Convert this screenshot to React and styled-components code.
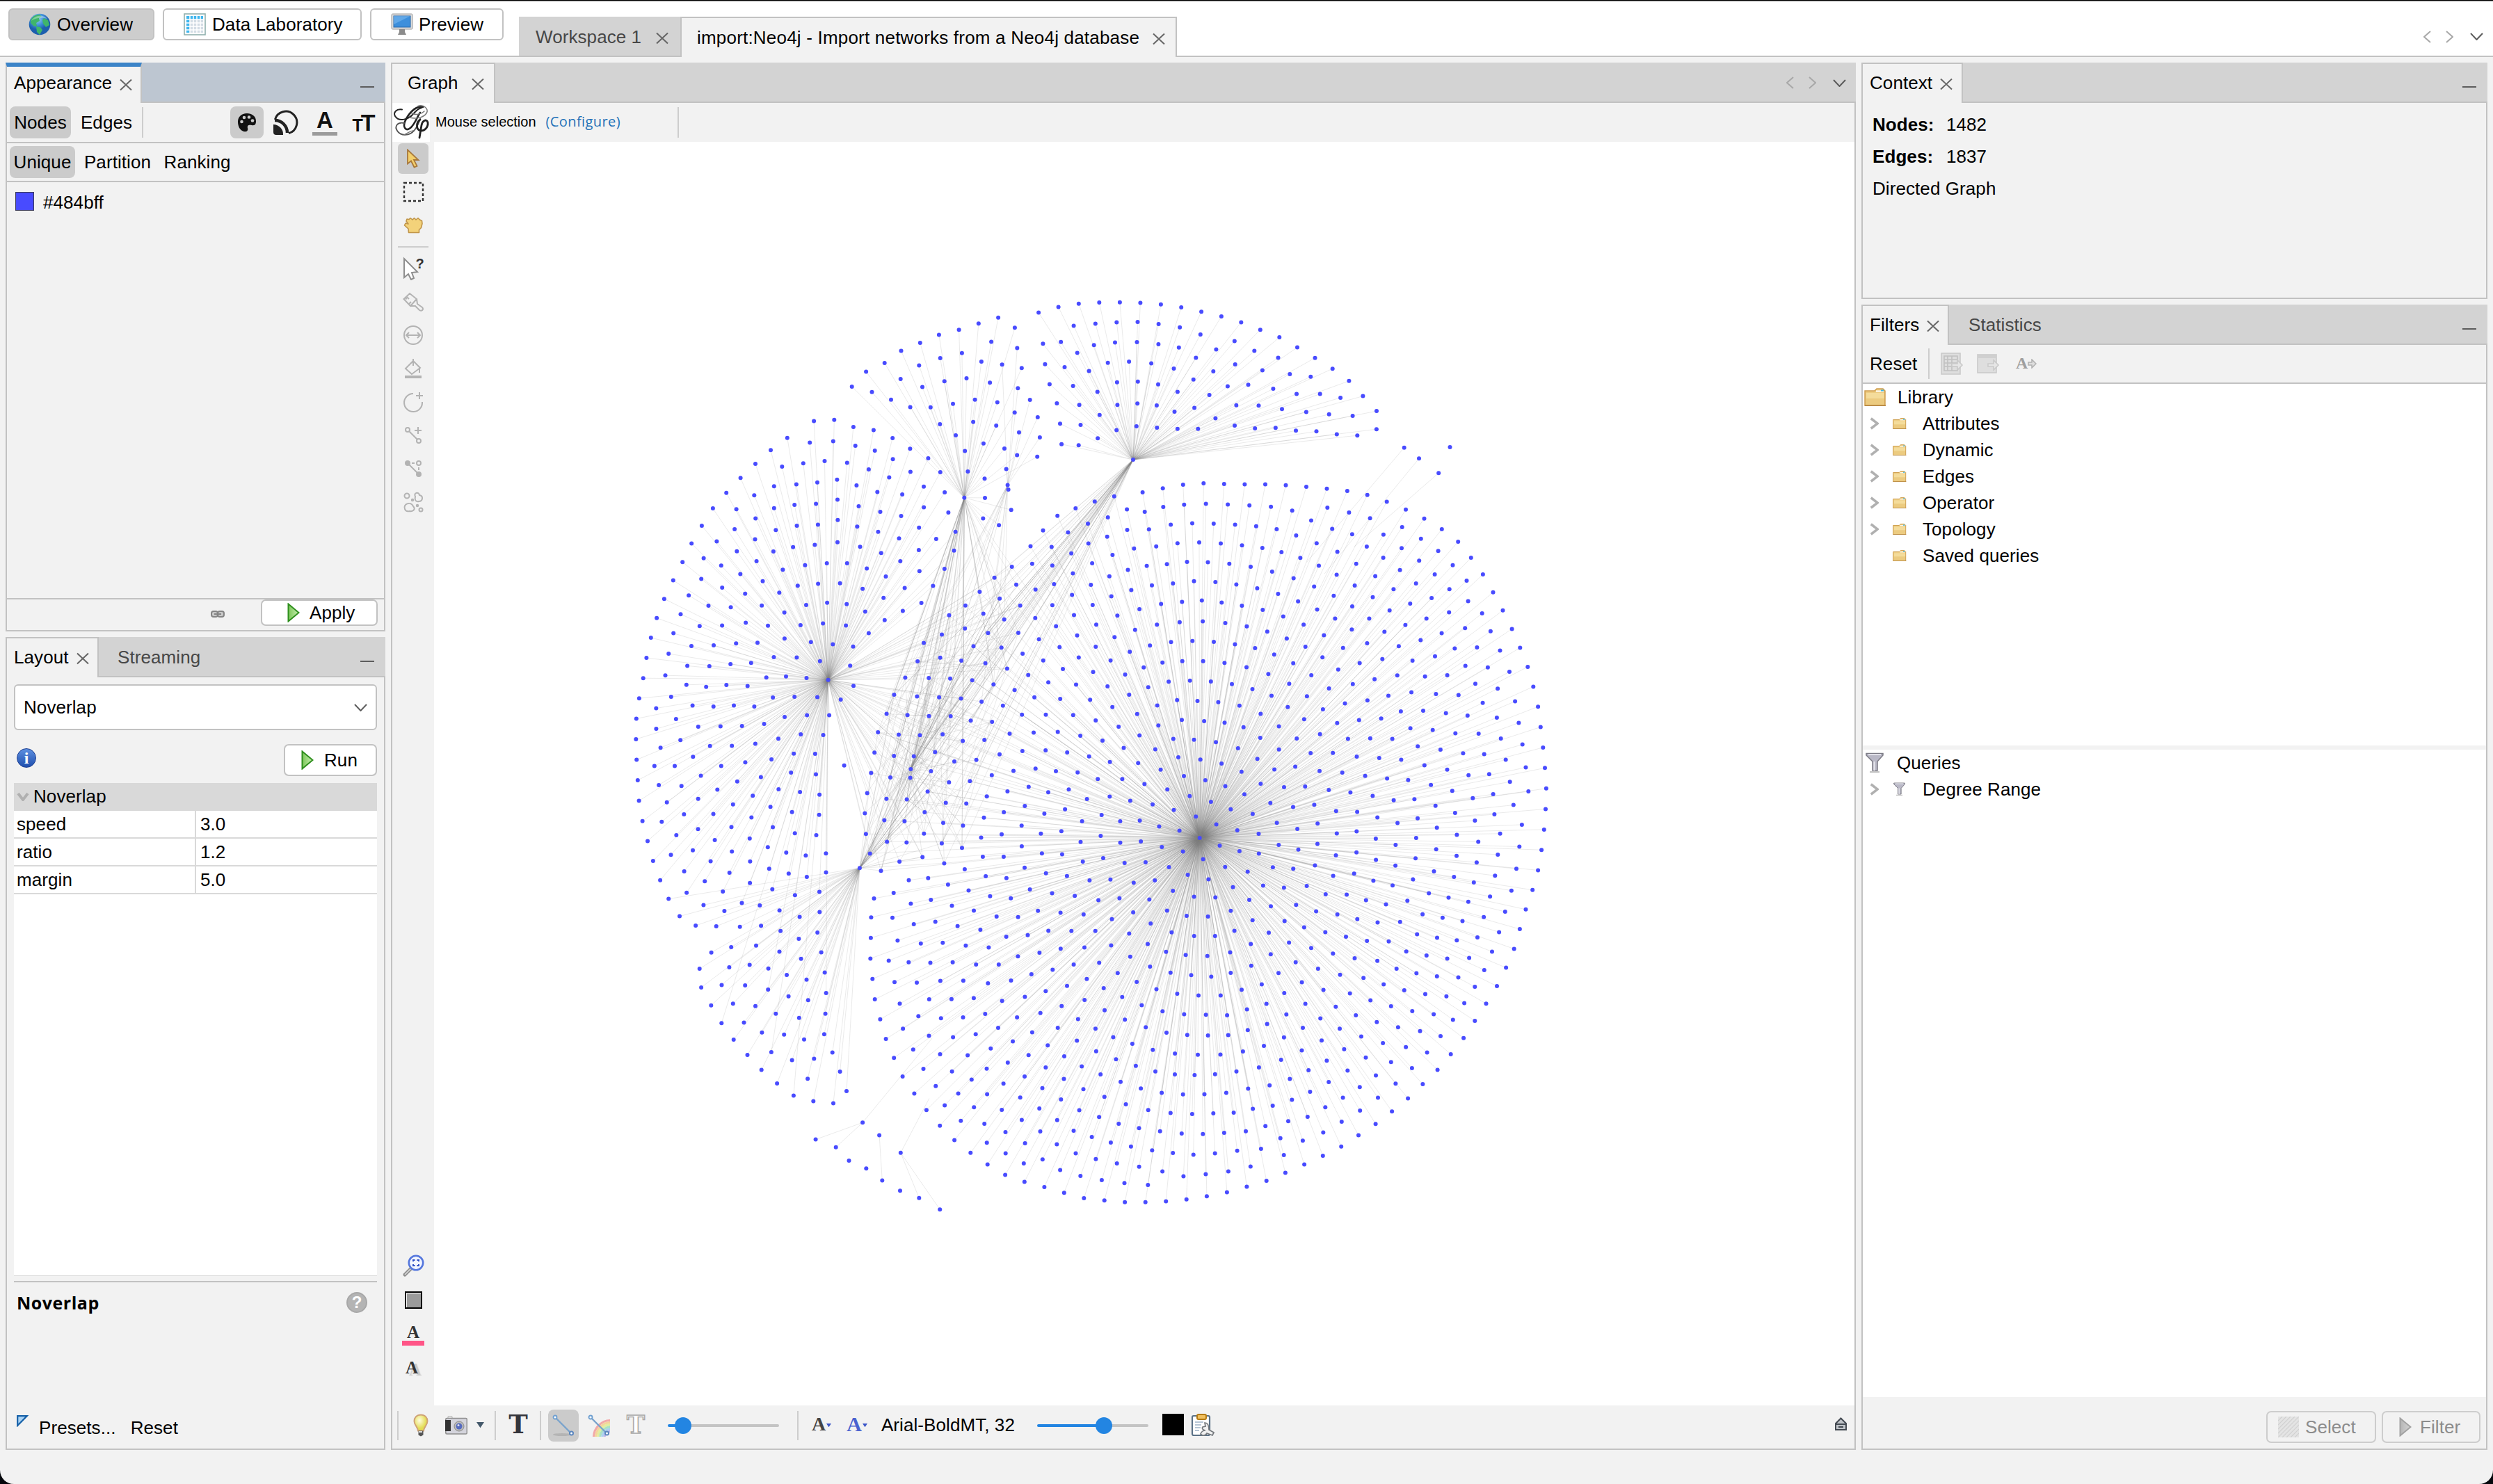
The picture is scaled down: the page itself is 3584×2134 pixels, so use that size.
import React from "react";
import styled, { createGlobalStyle, css } from "styled-components";

const line = "#c2c2c2";
const bg = "#f2f2f2";
const sans = `"Liberation Sans", Arial, sans-serif`;
const human = `"Open Sans", "Noto Sans", sans-serif`;
const serif = `"Liberation Serif", "Times New Roman", serif`;
const slab = `"DejaVu Serif", serif`;

const Global = createGlobalStyle`
  * { box-sizing: border-box; }
  body { margin: 0; background: #05070c; font-family: ${sans}; font-size: 26px; line-height: 30px; color: #000; letter-spacing: 0.08px; }
  svg { display: block; flex: none; }
`;

const Window = styled.div`
  width: 3584px; height: 2134px; background: ${bg}; overflow: hidden;
  border-radius: 0 0 20px 20px; border-top: 1px solid #000;
  display: flex; flex-direction: column;
`;
const TopBar = styled.header`
  height: 81px; flex: none; background: #fff; box-shadow: inset 0 1px #8a8a8a, inset 0 -2px ${line};
  display: flex; padding-left: 12px;
`;
const ModeButton = styled.button`
  width: ${p => p.$w}px; height: 46px; margin: 11px 12px 0 0; padding: 0 0 0 ${p => p.$pad}px;
  display: flex; align-items: center; gap: ${p => p.$gap || 8}px; flex: none;
  border: 2px solid ${line}; border-radius: 6px; background: ${p => (p.$on ? "#cdcdcd" : "#fff")};
  font: inherit; letter-spacing: inherit; color: #000; white-space: nowrap;
`;
const DocTab = styled.div`
  height: ${p => (p.$on ? 58 : 56)}px; margin-top: 23px; width: ${p => p.$w}px; flex: none; display: flex; align-items: center;
  padding: 2px 0 0 ${p => p.$pad}px; white-space: nowrap;
  background: ${p => (p.$on ? bg : "#d3d3d3")}; color: ${p => (p.$on ? "#000" : "#474747")};
  ${p => p.$on && css`border: 2px solid ${line}; border-bottom: 0; padding-top: 0;`}
`;
const Spacer = styled.div`flex: 1;`;
const Scroller = styled.div`
  display: flex; align-items: center; padding: ${p => p.$t || 0}px ${p => p.$r}px 0 0;
`;
const Work = styled.main`
  flex: 1; min-height: 0; display: flex; gap: 8px; padding: 8px 8px 49px 8px;
`;
const Column = styled.div`
  width: ${p => p.$w}px; flex: none; display: flex; flex-direction: column; gap: 8px;
`;
const Panel = styled.section`
  height: ${p => (p.$h ? p.$h + "px" : "auto")}; flex: ${p => (p.$h ? "none" : 1)};
  min-height: 0; display: flex; flex-direction: column;
`;
const PanelHead = styled.div`
  height: 58px; flex: none; display: flex; background: ${p => (p.$focus ? "#bdc6d1" : "#d3d3d3")};
  box-shadow: inset 0 -2px ${line};
`;
const PanelTab = styled.div`
  width: ${p => p.$w}px; height: 58px; flex: none; display: flex; align-items: center; white-space: nowrap;
  padding: 0 0 ${p => (p.$focus ? 6 : 3)}px ${p => p.$pad}px; background: ${bg};
  border: 2px solid ${line}; border-bottom: 0;
  ${p => p.$focus && css`border-top: 6px solid #3c84c8;`}
`;
const IdleTab = styled.div`
  padding: 14px 0 0 ${p => p.$pad}px; color: #474747;
`;
const Minimise = styled.div`
  width: 20px; height: 2px; background: #5c5c5c; margin: 34px 16px 0 0;
`;
const PanelBody = styled.div`
  flex: 1; min-height: 0; border: 2px solid ${line}; border-top: 0; display: flex; flex-direction: column;
`;
const ToolRow = styled.div`
  height: ${p => p.$h}px; flex: none; display: flex; align-items: ${p => p.$align || "center"};
  padding: 0 ${p => p.$r || 0}px ${p => p.$b || 0}px ${p => p.$pad || 0}px;
  border-bottom: ${p => (p.$rule ? "2px solid " + line : "0")};
  border-top: ${p => (p.$ruleTop ? "2px solid " + line : "0")};
`;
const Toggle = styled.span`
  height: 46px; display: flex; align-items: center; justify-content: center; flex: none;
  width: ${p => p.$w}px; margin-right: ${p => p.$m || 0}px; border-radius: 8px; white-space: nowrap;
  background: ${p => (p.$on ? "#cbcbcb" : "transparent")};
`;
const VRule = styled.i`
  width: 2px; height: ${p => p.$h || 44}px; background: #cdcdcd; flex: none;
  margin: 0 ${p => p.$r || 0}px 0 ${p => p.$l || 0}px;
`;
const Label = styled.span`
  white-space: nowrap; flex: none; margin: ${p => p.$t || 0}px 0 0 ${p => p.$l || 0}px;
  letter-spacing: ${p => (p.$ls !== undefined ? p.$ls + "px" : "inherit")};
  font-weight: ${p => (p.$b ? 700 : 400)};
`;
const Small = styled(Label)`
  font-size: 20px; letter-spacing: ${p => (p.$human ? 0.4 : 0)}px; font-family: ${p => (p.$human ? human : sans)};
  color: ${p => (p.$human ? "#2271b8" : "#000")};
`;
const PushButton = styled.button`
  width: ${p => p.$w}px; height: ${p => p.$h || 46}px; padding: 0 0 0 ${p => p.$pad}px; gap: ${p => p.$gap}px;
  display: flex; align-items: center; border: 2px solid ${p => (p.$off ? "#cdcdcd" : line)}; border-radius: 7px;
  background: ${p => (p.$off ? bg : "#fff")}; color: ${p => (p.$off ? "#8c8c8c" : "#000")};
  font: inherit; letter-spacing: inherit; flex: none; margin-top: ${p => p.$t || 0}px;
`;
const Swatch = styled.i`
  width: ${p => p.$s}px; height: ${p => p.$s}px; flex: none; background: ${p => p.$c};
  border: ${p => p.$bd || "0"}; margin-left: ${p => p.$l || 0}px; margin-bottom: ${p => p.$mb || 0}px;
  box-shadow: ${p => (p.$inner ? "inset 1px 1px #fff" : "none")};
`;
const Combo = styled.div`
  height: 66px; margin: 10px 10px 0; border: 2px solid ${line}; border-radius: 6px; background: #fff;
  display: flex; align-items: center; justify-content: space-between; padding: 0 12px 0 12px;
`;
const PropertyTable = styled.div`
  margin: 0 10px; height: 709px; flex: none; background: #fff; border-bottom: 1px solid #d9d9d9;
`;
const GroupRow = styled.div`
  height: 40px; background: #d9d9d9; display: flex; align-items: center; padding: 0 0 2px 4px; gap: 6px;
`;
const PropertyRow = styled.div`
  height: 40px; display: grid; grid-template-columns: 262px 1fr; border-bottom: 2px solid #d9d9d9;
  line-height: 39px;
  & > span { padding-left: 4px; }
  & > span:first-child { border-right: 2px solid #d9d9d9; }
  & > span:last-child { padding-left: 6px; }
`;
const Description = styled.div`
  flex: 1; margin: 7px 10px 0; border-top: 2px solid ${line}; display: flex; flex-direction: column;
  justify-content: space-between;
`;
const DescHead = styled.div`
  display: flex; justify-content: space-between; align-items: center; padding: 9px 14px 0 4px; height: 48px;
  font: 700 25px/30px ${human}; letter-spacing: 0.5px;
`;
const DescFoot = styled.div`
  display: flex; padding: 0 0 13px 4px; height: 48px;
`;
const Badge = styled.span`
  width: ${p => p.$s}px; height: ${p => p.$s}px; border-radius: 50%; flex: none; margin-top: ${p => p.$t || 0}px;
  display: flex; align-items: center; justify-content: center; color: #fff;
  font: 700 ${p => p.$f}px/1 ${p => (p.$serif ? serif : sans)}; letter-spacing: 0;
  background: ${p => p.$c}; border: ${p => p.$bd || 0};
`;
const GraphArea = styled.div`flex: 1; min-height: 0; display: flex;`;
const Tools = styled.aside`
  width: 60px; flex: none; display: flex; flex-direction: column; align-items: center; padding-top: 2px;
`;
const Tool = styled.span`
  width: 44px; height: 44px; margin-bottom: ${p => (p.$m !== undefined ? p.$m : 4)}px; border-radius: 6px; flex: none;
  display: flex; align-items: center; justify-content: center; background: ${p => (p.$on ? "#cbcbcb" : "transparent")};
`;
const HRule = styled.i`width: 44px; height: 2px; background: #cdcdcd; flex: none; margin: 8px 0;`;
const CanvasBox = styled.div`flex: 1; background: #fff;`;
const families = { sans, slab };
const Glyph = styled.span`
  font: 700 ${p => p.$f}px/1 ${p => families[p.$font] || serif}; letter-spacing: 0; color: ${p => p.$c || "#333"}; flex: none;
  margin: ${p => p.$m || 0};
  ${p => p.$outline && css`-webkit-text-stroke: 1.5px #a9a9a9;`}
  ${p => p.$shadow && css`text-shadow: 5px 3px 1px #c9c9c9;`}
`;
const Underlined = styled.span`
  display: flex; flex-direction: column; align-items: center; width: ${p => p.$w}px;
  border-bottom: ${p => p.$bar}px solid ${p => p.$c}; flex: none;
`;
const SliderBox = styled.span`
  width: 160px; height: 4px; border-radius: 2px; flex: none; display: flex; align-items: center;
  margin-left: ${p => p.$l}px;
  background: linear-gradient(to right, #2385e2 ${p => p.$v}px, #c4c4c4 ${p => p.$v}px);
  &::before { content: ""; width: 24px; height: 24px; border-radius: 50%; background: #2385e2; margin-left: ${p => p.$v - 12}px; }
`;
const Facts = styled.div`
  padding: 20px 0 0 14px; display: grid; grid-template-columns: 106px auto; grid-auto-rows: 46px;
  line-height: 22px; justify-content: start; white-space: nowrap;
`;
const Tree = styled.div`
  background: #fff; flex: ${p => (p.$h ? "none" : 1)}; height: ${p => (p.$h ? p.$h + "px" : "auto")};
  margin-bottom: ${p => p.$m || 0}px;
`;
const TreeRow = styled.div`
  height: 38px; display: flex; align-items: center; padding-left: ${p => p.$pad}px; white-space: nowrap;
`;
const Slot = styled.span`
  width: ${p => p.$w}px; height: ${p => (p.$h ? p.$h + "px" : "auto")}; flex: none; display: flex; align-items: center;
  justify-content: ${p => (p.$mid ? "center" : "flex-start")}; margin-left: ${p => p.$l || 0}px;
`;
const FootRow = styled.div`
  height: 74px; flex: none; display: flex; justify-content: flex-end; padding: 20px 8px 0 0; gap: 8px;
`;
const Drawing = styled.svg`margin: ${p => p.$m || 0};`;

/* ---------- icons ---------- */
const Close = ({ m = "4px 0 0 12px" }) => (
  <Drawing width="18" height="18" viewBox="0 0 18 18" $m={m}>
    <path d="M1 1.5 17 16.5M17 1.5 1 16.5" stroke="#666" strokeWidth="2" fill="none" />
  </Drawing>
);
const Chevron = ({ w, h, d, c = "#5c5c5c", s = 2, ml = 0 }) => {
  const o = s / 2;
  const path = { down: `M${o} ${o}L${w / 2} ${h - o}L${w - o} ${o}`, left: `M${w - o} ${o}L${o} ${h / 2}L${w - o} ${h - o}`, right: `M${o} ${o}L${w - o} ${h / 2}L${o} ${h - o}` }[d];
  return <Drawing width={w} height={h} $m={`0 0 0 ${ml}px`}><path d={path} fill="none" stroke={c} strokeWidth={s} /></Drawing>;
};
const ScrollArrows = ({ r, t }) => (
  <Scroller $r={r} $t={t}>
    <Chevron w={11} h={18} d="left" c="#a8a8a8" />
    <Chevron w={11} h={18} d="right" c="#a8a8a8" ml={21} />
    <Chevron w={19} h={11} d="down" ml={24} />
  </Scroller>
);
const Globe = () => (
  <svg width="32" height="32" viewBox="0 0 32 32">
    <defs><radialGradient id="gl" cx=".4" cy=".25"><stop offset="0" stopColor="#9fd3f6" /><stop offset=".6" stopColor="#3f8fd8" /><stop offset="1" stopColor="#1d5fae" /></radialGradient></defs>
    <circle cx="16" cy="16" r="15.3" fill="url(#gl)" />
    <path d="M3 10C6 4 11 2 16 2l3 3-4 2 1 4-5 3 1 4-4 1-5-5zM11 19l6 1 3 4-4 7-4-4zM22 7l6 3 2 7-5 3-4-5-1-5z" fill="#3fb56b" />
    <path d="M4 11c4-8 17-10 23-3C20 6 10 6 4 11z" fill="#fff" opacity=".35" />
  </svg>
);
const Sheet = () => (
  <svg width="32" height="32" viewBox="0 0 32 32">
    <rect x="1" y="1" width="30" height="30" fill="#fff" stroke="#8fb0ad" strokeWidth="1.6" />
    <rect x="4" y="4" width="24" height="24" fill="#d3dce4" /><path d="M4 4h24v5H9v19H4z" fill="#3fb6ee" />
    <path d="M4 9h24M4 14h24M4 19h24M4 24h24M9 4v24M14 4v24M19 4v24M24 4v24" stroke="#fff" strokeWidth="1.5" />
  </svg>
);
const Monitor = () => (
  <svg width="32" height="32" viewBox="0 0 32 32">
    <rect x="1" y="1" width="30" height="22" rx="1.5" fill="#dcdcdc" stroke="#9a9a9a" />
    <rect x="4" y="4" width="24" height="16" fill="#3d8fdc" stroke="#2766a8" /><path d="M4 4h24L4 16z" fill="#7bb9ee" opacity=".6" />
    <path d="M12 23h8v4l2 4H10l2-4z" fill="#8b8b8b" />
  </svg>
);
const Palette = () => (
  <svg width="28" height="28" viewBox="0 0 28 28">
    <path d="M14 1C6 1 1 6 1 13c0 7 3 12 8 14 5 1 7-1 6-5-1-4 2-5 6-4 5 1 6-2 6-6C27 5 21 1 14 1z" fill="#111" />
    <g fill="#cbcbcb"><circle cx="6.5" cy="13" r="2.3" /><circle cx="10" cy="7" r="2.3" /><circle cx="17" cy="6.5" r="2.3" /><circle cx="22" cy="11.5" r="2.3" /></g>
  </svg>
);
const Rings = () => (
  <svg width="36" height="36" viewBox="0 0 36 36" fill="none" stroke="#222">
    <path d="M2.400 14A16 16 0 1 1 22 33.600" strokeWidth="3" />
    <path d="M2 15A18 18 0 0 1 20 33" strokeWidth="4.500" />
    <path d="M0 21A14 14 0 0 1 14 36H4Q0 36 0 32z" fill="#222" stroke="none" />
  </svg>
);
const Play = ({ off }) => (
  <svg width="18" height="28" viewBox="0 0 18 28">
    <defs><linearGradient id={off ? "po" : "pg"}><stop offset="0" stopColor={off ? "#b5b5b5" : "#7cc75a"} /><stop offset="1" stopColor={off ? "#d5d5d5" : "#c6efae"} /></linearGradient></defs>
    <path d="M1.5 1.5 16.5 14 1.5 26.5z" fill={`url(#${off ? "po" : "pg"})`} stroke={off ? "#a2a2a2" : "#2f8f1e"} strokeWidth="2" />
  </svg>
);
const Chain = () => (
  <svg width="20" height="12" viewBox="0 0 20 12" fill="none" stroke="#858585" strokeWidth="2">
    <rect x="1" y="2" width="9" height="8" rx="3" fill="#c9c9c9" /><rect x="10" y="2" width="9" height="8" rx="3" fill="#c9c9c9" /><path d="M5 6h10" />
  </svg>
);
const GephiLogo = () => (
  <svg width="54" height="56" viewBox="0 0 54 56" fill="none" stroke="#222" strokeLinecap="round">
    <rect width="54" height="56" fill="#fff" stroke="none" />
    <path d="M14 9.500C6 8 1 14 4 19c5 8 18 6 26-3 5-6 8-8 12-9" strokeWidth="2" />
    <path d="M44 6C32 3 22 18 18 27c-3 9 2 14 8 9 7-6 10-17 14-22" strokeWidth="2.600" />
    <path d="M36 5c9-4 17 4 13 10-5 7-16 8-24 6M28 15c6 3 14 1 18-3" strokeWidth="1.500" stroke="#777" />
    <path d="M17 29C7 27 3 34 7 40c5 8 18 8 25-1 4-5 6-10 8-16" strokeWidth="1.900" stroke="#555" />
    <path d="M32 40c-4-1-10 3-15 6" strokeWidth="1.500" stroke="#777" />
    <path d="M40 24c-6 4-6 14 0 16 6 1 12-5 11-12-2-6-8-2-9 4l-3 18" strokeWidth="2.800" />
  </svg>
);
const G = ({ children, w = 32, h = 32 }) => (
  <svg width={w} height={h} viewBox={`0 0 ${w} ${h}`} fill="none" stroke="#b3b3b3" strokeWidth="2">{children}</svg>
);
const Cursor = () => (
  <svg width="20" height="28" viewBox="0 0 20 28"><path d="M2 1.5v20l5-4 4.500 9 4-1.800-4.500-8.700h6.500z" fill="#f3cf6c" stroke="#a8783a" strokeWidth="1.8" /></svg>
);
const Hand = () => (
  <svg width="28" height="24" viewBox="0 0 28 24"><path d="M7.500 22.500 7 17 1.500 12l1.500-3 4 1-3-4 1-3 3 .5L10 1.500 13 4l2.500-2.500L18 4l3-2.500L23.500 4l3 1.500.5 4-1.500 6-3 3v4z" fill="#f3d27a" stroke="#c0954a" strokeWidth="1.6" strokeLinejoin="round" /></svg>
);
const HelpCursor = () => (
  <svg width="30" height="34" viewBox="0 0 30 34">
    <path d="M2 3v27l6-5 4 8 4-2-3-8 8-1z" fill="#fff" stroke="#8e8e8e" strokeWidth="2" />
    <text x="18.500" y="17" fontFamily="Liberation Sans" fontWeight="700" fontSize="20" letterSpacing="0" fill="#333">?</text>
  </svg>
);
const Brush = () => <G><path d="M2.500 12 11 4l10 8-9 10zM21 12l1 7 7 5c3 3-1 6-4 4l-6-6-7 0M7 9l3 3M5 12l2-1M10 19l3-3" /></G>;
const Width = () => <G><circle cx="16" cy="16" r="13" /><path d="M6 16h20M10 12l-4 4 4 4M22 12l4 4-4 4" /></G>;
const Bucket = () => <G><path d="M16 2v10M16 5 5 16l9 8L26 15 16 5M25 14v8" /><path d="M4 28h24" strokeWidth="4" /></G>;
const AddNode = () => <G><path d="M16 4A13 13 0 1 0 29 16M25 2v10M20 7h10" /></G>;
const AddEdge = () => <G><circle cx="8" cy="8" r="3" /><circle cx="24" cy="24" r="3" /><path d="m10 10 12 12M23 4v10M18 9h10" /></G>;
const PathIcon = () => <G><circle cx="8" cy="8" r="3" fill="#b3b3b3" /><circle cx="24" cy="24" r="3" fill="#b3b3b3" /><circle cx="24" cy="8" r="3" /><path d="m10 10 12 12M14 8h4M24 14v4" /></G>;
const Heat = () => <G><circle cx="7" cy="7" r="3.500" /><path d="M19 8c-3-5 5-8 6-2 6 1 5 9-1 9-5 1-6-3-5-7zM4 26c-3-7 8-12 12-4 5 5-2 8-5 7-4 1-6 0-7-3z" /><circle cx="27" cy="27" r="2.500" /><circle cx="15" cy="13" r="1.200" /><circle cx="22" cy="21" r="1.200" /></G>;
const Magnifier = () => (
  <svg width="32" height="34" viewBox="0 0 32 34" fill="none">
    <path d="M14 19 4 29" stroke="#8e8e8e" strokeWidth="5" strokeLinecap="round" /><path d="M14 19 4 29" stroke="#ddd" strokeWidth="1.5" />
    <circle cx="20" cy="12" r="10.200" fill="#f3f6ff" stroke="#5577dd" strokeWidth="2.600" />
    <path d="M16 10V8h2.500M21.500 8H24v2M24 14v2h-2.500M18.500 16H16v-2" stroke="#2b4cc4" strokeWidth="2" />
  </svg>
);
const Bulb = () => (
  <svg width="22" height="34" viewBox="0 0 22 34">
    <defs><radialGradient id="bl" cx=".4" cy=".35"><stop offset="0" stopColor="#fffde0" /><stop offset="1" stopColor="#e3dc55" /></radialGradient></defs>
    <path d="M11 1.500c-6 0-9.500 4-9.500 9 0 6 5 8 5.500 14h8c.5-6 5.500-8 5.500-14 0-5-3.500-9-9.500-9z" fill="url(#bl)" stroke="#cfa277" strokeWidth="2" />
    <path d="M7.500 24.500h7v6l-3.500 2-3.500-2z" fill="#555" /><path d="M8 26h5" stroke="#ddd" strokeWidth="2" />
  </svg>
);
const Camera = () => (
  <svg width="32" height="28" viewBox="0 0 32 28">
    <rect x=".8" y="3.500" width="30.500" height="22.500" rx="1.500" fill="#d4d4dc" stroke="#8e8e8e" strokeWidth="1.500" /><rect x="0" y="6" width="8" height="16" fill="#333" />
    <path d="M4 3V1h6v2" stroke="#aaa" fill="none" /><circle cx="20" cy="15" r="7" fill="#bbb" stroke="#888" /><circle cx="20" cy="15" r="4.500" fill="#566bc0" /><circle cx="19" cy="13.500" r="1.500" fill="#dde" />
  </svg>
);
const Drop = ({ c = "#44596b", s = 10, m = 0 }) => <Drawing width={s} height={s * 0.75} viewBox="0 0 10 7.500" $m={m}><path d="M0 0h10L5 7.500z" fill={c} /></Drawing>;
const spectrum = ["#f28b8b", "#f6c877", "#dcec7c", "#8fdcae", "#8fc4ee", "#a99bea"];
const EdgeIcon = ({ rainbow }) => (
  <svg width="32" height="32" viewBox="0 0 32 32" fill="none">
    {rainbow
      ? <g strokeWidth="3.200" opacity=".7">{spectrum.map((c, i) => <circle key={c} cx="33" cy="33" r={24.500 - i * 3.100} stroke={c} />)}</g>
      : <ellipse cx="14" cy="29" rx="13" ry="2" fill="#b4b4b4" />}
    <path d="m5 5 21 21" stroke="#7aa3cc" strokeWidth="2.400" /><circle cx="4" cy="4" r="2.500" fill="#fff" stroke="#6e9fd0" strokeWidth="1.800" /><circle cx="27.500" cy="27" r="2.500" fill="#fff" stroke="#5b86bd" strokeWidth="2" />
  </svg>
);
const Clipboard = () => (
  <svg width="34" height="33" viewBox="0 0 34 33">
    <rect x="2" y="3" width="25" height="28" rx="2" fill="#fff" stroke="#5a7186" strokeWidth="2.200" />
    <path d="M6 12h12M6 16h9M6 20h8M6 24h6" stroke="#9fb3c6" strokeWidth="1.500" /><rect x="9" y="1" width="13" height="7" rx="2" fill="#f0c060" stroke="#b57b14" strokeWidth="2" />
    <path d="M14 29c2 3 7 3 9-1l8 3 2-4-7-4c0-6-2-10-6-10l1 5-4 1c-2 3 2 5 4 5-3 0-6 2-7 5z" fill="#f1f1f1" stroke="#75797d" strokeWidth="1.700" />
  </svg>
);
const Lock = () => (
  <Drawing width="19" height="20" viewBox="0 0 19 20" $m="0 0 3px"><path d="M2 9 9.500 1.500 17 9v9H2z" fill="#bfc3c8" stroke="#444a52" strokeWidth="2" /><path d="M2 10h15M6 14h7" stroke="#444a52" strokeWidth="2" /></Drawing>
);
const Folder = ({ s = 32 }) => (
  <svg width={s} height={s * 0.84} viewBox="0 0 32 27">
    <path d="M1 4h14l3-3h9l3 3v21.500H1z" fill="#eccb80" stroke="#cf9f50" strokeWidth="1.600" /><path d="M17 3.500h11v2H17z" fill="#fff" /><path d="M24 2.500h4v2h-4z" fill="#35b5e8" />
    <path d="M3 7h26v8H3z" fill="#f8e3a6" opacity=".7" /><path d="M1 25.500h30" stroke="#b78742" strokeWidth="2" />
  </svg>
);
const Funnel = ({ s = 26 }) => (
  <svg width={s} height={s * 1.12} viewBox="0 0 26 29">
    <path d="M1 1.500h24v2.500l-8 9v13h-7V13L1 4z" fill="#b9b8c6" stroke="#7c7b85" strokeWidth="1.500" /><path d="M4 3h18" stroke="#f3f3f8" strokeWidth="1.500" /><path d="M12.500 13v13" stroke="#e8e8ef" strokeWidth="2" /><path d="M6 28h14" stroke="#aaa" strokeWidth="1.500" />
  </svg>
);
const GridArrow = ({ plain }) => (
  <svg width="33" height="32" viewBox="0 0 33 32" fill="none" stroke="#cacaca" strokeWidth="1.600">
    <rect x="1" y={plain ? 3 : 1} width="27" height={plain ? 26 : 30} fill="#dedede" />
    {plain ? <path d="M1 6h27" strokeWidth="4" stroke="#d0d0d0" /> : <path d="M5 5h19v21H5zM5 10h19M5 15h19M5 20h19M10 5v21M16 5v21" stroke="#c0c0c0" />}
    <path d="M16 16h8v-5l7 7-7 7v-5h-8z" fill="#e6e6e6" />
  </svg>
);
const TextArrow = () => <svg width="13" height="14"><path d="M1 5h5V1l6 6-6 6V9H1z" fill="#dedede" stroke="#b0b0b0" strokeWidth="1.500" /></svg>;
const Hatch = () => (
  <svg width="30" height="30" viewBox="0 0 30 30">
    <rect width="30" height="30" fill="#e4e4e4" />
    <path d="M0 6 6 0M0 12 12 0M0 18 18 0M0 24 24 0M0 30 30 0M6 30 30 6M12 30 30 12M18 30 30 18M24 30 30 24" stroke="#d0d0d0" strokeWidth="1.200" />
  </svg>
);
const PresetMark = () => <svg width="17" height="17" viewBox="0 0 17 17"><path d="M1.200 1.200h13.500L1.200 15z" fill="#a9d3f5" stroke="#1560a8" strokeWidth="2.200" /></svg>;

/* ---------- network ---------- */
const seeded = seed => () => {
  seed = (seed * 1664525 + 1013904223) % 4294967296;
  return seed / 4294967296;
};
const toGraph = ([x, y]) => [900 + x / 1.17015, 400 + y / 1.15294];
const pts = text => text.trim().split(/\s+/).map(pair => toGraph(pair.split(",").map(Number)));

const regions = [
  { hub: [965, 928], edge: "869,355 900,349 932,343 965,340 1030,342 1093,342 1160,347 1234,355 1298,377 1360,407 1399,436 1435,480 1468,537 1496,593 1520,652 1534,709 1542,772 1548,835 1548,867 1543,931 1532,994 1511,1054 1491,1122 1462,1180 1405,1266 1363,1315 1309,1366 1256,1406 1198,1443 1140,1470 1079,1496 1019,1514 957,1526 893,1532 830,1532 767,1525 708,1508 647,1492 592,1460 541,1420 499,1372 462,1319 437,1261 419,1199 411,1131 413,1030 440,1020 467,1018 426,980 405,945 401,876 410,833 425,746 443,714 454,682 490,637 497,606 530,594 547,550 580,540 595,520 614,500 650,478 688,473 680,443 707,412 735,385 773,379 800,364 837,360" },
  { hub: [340, 666], edge: "316,237 348,234 376,246 409,249 458,269 487,289 525,306 534,344 542,388 560,436 534,485 495,541 445,559 410,587 377,615 377,652 384,682 346,710 334,752 318,789 320,834 328,867 320,924 343,966 323,1024 326,1054 321,1093 330,1123 335,1156 337,1193 333,1259 350,1289 362,1321 373,1354 345,1370 312,1364 281,1355 254,1335 230,1315 189,1272 167,1246 149,1215 130,1185 118,1154 140,1119 192,1105 164,1075 133,1074 102,1073 83,1049 67,1021 55,992 44,962 36,932 28,902 22,870 18,806 16,740 21,702 28,669 33,636 41,599 52,562 67,525 84,492 100,461 115,430 145,383 182,341 208,317 233,293 260,272 288,254" },
  { hub: [569, 364], edge: "380,180 404,155 433,142 459,122 491,109 522,95 556,87 587,77 631,64 655,83 658,116 666,151 657,192 687,205 697,251 694,296 660,295 636,276 642,343 648,385 630,410 600,405 604,362 606,333 576,327 567,266 532,251 516,214 484,216 452,204 418,190" },
  { hub: [853, 301], edge: "694,57 726,48 764,42 800,40 835,40 871,41 905,44 939,49 974,57 1008,65 1041,75 1073,88 1104,100 1133,117 1162,134 1190,151 1217,171 1239,195 1262,217 1268,248 1238,261 1203,260 1167,254 1134,254 1097,248 1057,249 1028,246 991,232 962,250 919,250 882,247 846,245 810,257 775,275 733,281 730,239 724,203 708,165 703,129 700,90" },
].map(r => ({ hub: toGraph(r.hub), edge: pts(r.edge) }));

const strays = pts("1309,281 1334,299 1386,280 1367,323 319,1428 353,1441 375,1463 404,1476 431,1496 461,1513 493,1525 528,1544 398,1400 426,1421 462,1450 642,343 479,814 393,978 367,808");
const dist = (a, b) => Math.hypot(a[0] - b[0], a[1] - b[1]);
const inside = (p, poly) => {
  let hit = false;
  for (let i = 0, j = poly.length - 1; i < poly.length; j = i++) {
    const [xi, yi] = poly[i], [xj, yj] = poly[j];
    if (yi > p[1] !== yj > p[1] && p[0] < ((xj - xi) * (p[1] - yi)) / (yj - yi) + xi) hit = !hit;
  }
  return hit;
};
const walk = (poly, d) => {
  const out = [];
  let carry = 0;
  poly.forEach((a, i) => {
    const b = poly[(i + 1) % poly.length], len = dist(a, b);
    let t = carry;
    while (t < len) {
      const q = [a[0] + ((b[0] - a[0]) * t) / len, a[1] + ((b[1] - a[1]) * t) / len];
      if (out.every(o => dist(o, q) > d * 0.6)) out.push(q);
      t += d;
    }
    carry = t - len;
  });
  return out;
};
const fill = (region, d, rnd) => {
  const rim = walk(region.edge, d * 0.97);
  const inner = [];
  for (let k = 1; k < 40; k++) {
    const r = k * d * 0.93, n = Math.round((2 * Math.PI * r) / d), off = rnd() * 6.28;
    for (let i = 0; i < n; i++) {
      const a = off + (i / n) * Math.PI * 2;
      const p = [region.hub[0] + Math.cos(a) * r + (rnd() - 0.5) * 9, region.hub[1] + Math.sin(a) * r + (rnd() - 0.5) * 9];
      if (inside(p, region.edge) && rim.every(q => dist(p, q) > d * 0.62)) inner.push(p);
    }
  }
  return { rim, inner };
};
const relax = ({ rim, inner }, hub, d) => {
  const fixed = [...rim, hub];
  for (let step = 0; step < 22; step++) {
    const all = [...fixed, ...inner];
    inner = inner.map(p => {
      let fx = 0, fy = 0;
      for (const q of all) {
        const dx = p[0] - q[0], dy = p[1] - q[1];
        if (q === p || Math.abs(dx) > d * 1.15 || Math.abs(dy) > d * 1.15) continue;
        const l = Math.hypot(dx, dy) || 1;
        if (l < d * 1.15) { fx += (dx / l) * (d * 1.15 - l); fy += (dy / l) * (d * 1.15 - l); }
      }
      return [p[0] + fx * 0.16, p[1] + fy * 0.16];
    });
  }
  return [...rim, ...inner];
};
const buildNetwork = () => {
  let d = 25, parts;
  for (; d < 40; d += 0.25) {
    const rnd = seeded(7);
    parts = regions.map(r => fill(r, d, rnd));
    if (parts.reduce((s, p) => s + p.rim.length + p.inner.length, 0) + strays.length + 4 <= 1482) break;
  }
  const rnd = seeded(21);
  const groups = parts.map((p, i) => relax(p, regions[i].hub, d));
  const hubs = regions.map(r => r.hub);
  const [main, left, mid, top] = hubs;
  const lower = toGraph([393, 978]), small = toGraph([479, 814]), tiny = toGraph([642, 343]);
  const edges = [];
  const bridge = [];
  groups[0].forEach(p => {
    const west = p[0] < 1475 && p[1] < 1260 && p[0] + (p[1] - 700) * 0.25 < 1520;
    if (west) {
      bridge.push(p);
      edges.push([rnd() < 0.75 ? left : main, p]);
      if (rnd() < 0.45) edges.push([main, p]);
    } else edges.push([main, p]);
  });
  groups[1].forEach(p => edges.push([p[1] > 1290 && rnd() < 0.9 ? lower : left, p]));
  groups[2].forEach(p => edges.push([p[0] > 1440 && rnd() < 0.5 ? tiny : mid, p]));
  groups[3].forEach(p => edges.push([top, p]));
  const pick = () => bridge[Math.floor(rnd() * bridge.length)];
  const link = (hub, n) => { for (let i = 0; i < n; i++) edges.push([hub, pick()]); };
  link(top, 44);
  link(mid, 46);
  link(small, 54);
  link(lower, 44);
  link(tiny, 12);
  for (let i = 0; i < 50; i++) edges.push([pick(), pick()]);
  for (let i = 0; i < 8; i++) edges.push([top, [small[0] - rnd() * 60, small[1] + rnd() * 60]]);
  edges.push([strays[0], toGraph([1145, 471])], [strays[1], toGraph([1175, 490])], [strays[3], toGraph([1225, 445])]);
  edges.push([strays[12], strays[4]], [strays[12], strays[5]], [strays[12], toGraph([515, 1260])], [strays[13], strays[8]], [strays[14], strays[10]], [strays[14], strays[11]], [strays[14], toGraph([510, 1360])]);
  return { nodes: [...groups.flat(), ...strays, ...hubs], edges };
};
const network = buildNetwork();

const Network = () => (
  <svg width="2042" height="1816" viewBox="624 204 2042 1816">
    <g stroke="#808080" strokeOpacity=".17" strokeWidth="1">
      {network.edges.map(([a, b], i) => <line key={i} x1={a[0].toFixed(1)} y1={a[1].toFixed(1)} x2={b[0].toFixed(1)} y2={b[1].toFixed(1)} />)}
    </g>
    <g fill="#484bff">
      {network.nodes.map((n, i) => <circle key={i} cx={n[0].toFixed(1)} cy={n[1].toFixed(1)} r="3" />)}
    </g>
  </svg>
);

/* ---------- panels ---------- */
const Appearance = () => (
  <Panel $h={818}>
    <PanelHead $focus>
      <PanelTab $w={196} $pad={10} $focus>Appearance<Close m="5px 0 0 11px" /></PanelTab>
      <Spacer /><Minimise />
    </PanelHead>
    <PanelBody>
      <ToolRow $h={58} $rule $pad={4} $r={8}>
        <Toggle $w={88} $m={6} $on>Nodes</Toggle><Toggle $w={90} $m={6}>Edges</Toggle><VRule />
        <Spacer />
        <Toggle $w={48} $m={8} $on><Palette /></Toggle>
        <Toggle $w={48} $m={8}><Rings /></Toggle>
        <Toggle $w={48} $m={8}><Underlined $w={36} $bar={5} $c="#9b9b9b"><Glyph $font="sans" $f={33} $c="#111" $m="-2px 0 1px">A</Glyph></Underlined></Toggle>
        <Toggle $w={48} $m={-3}><Glyph $font="sans" $f={25} $c="#111" $m="8px 0 0">T</Glyph><Glyph $font="sans" $f={34} $c="#111" $m="0 0 0 -3px">T</Glyph></Toggle>
      </ToolRow>
      <ToolRow $h={56} $rule $pad={4}>
        <Toggle $w={94} $m={14} $on>Unique</Toggle><Toggle $w={94} $m={20}>Partition</Toggle><Toggle $w={95}>Ranking</Toggle>
      </ToolRow>
      <ToolRow $h={58} $pad={12}>
        <Swatch $s={27} $c="#484bff" $bd="1px solid #3a3a5a" $mb={4} />
        <Label $l={13}>#484bff</Label>
      </ToolRow>
      <Spacer />
      <ToolRow $h={46} $align="flex-start" $ruleTop>
        <Slot $w={293} /><Slot $w={72} $h={42}><Chain /></Slot>
        <PushButton $w={168} $h={38} $pad={36} $gap={14}><Play />Apply</PushButton>
      </ToolRow>
    </PanelBody>
  </Panel>
);

const properties = [["speed", "3.0"], ["ratio", "1.2"], ["margin", "5.0"]];

const LayoutPanel = () => (
  <Panel>
    <PanelHead>
      <PanelTab $w={134} $pad={10}>Layout<Close m="5px 0 0 11px" /></PanelTab>
      <IdleTab $pad={27}>Streaming</IdleTab>
      <Spacer /><Minimise />
    </PanelHead>
    <PanelBody>
      <Combo>Noverlap<Chevron w={19} h={11} d="down" /></Combo>
      <ToolRow $h={76} $pad={14} $r={10}>
        <Badge $s={28} $f={24} $t={4} $serif $c="linear-gradient(#5d8fe0,#1f4fae)" $bd="1px solid #1d3f92">i</Badge>
        <Spacer />
        <PushButton $w={134} $pad={23} $gap={15} $t={10}><Play />Run</PushButton>
      </ToolRow>
      <PropertyTable>
        <GroupRow><Chevron w={18} h={13} d="down" c="#b0b0b0" s={4} />Noverlap</GroupRow>
        {properties.map(([k, v]) => <PropertyRow key={k}><span>{k}</span><span>{v}</span></PropertyRow>)}
      </PropertyTable>
      <Description>
        <DescHead>Noverlap<Badge $s={30} $f={24} $c="#b4b4b4" $bd="2px solid #a8a8a8">?</Badge></DescHead>
        <DescFoot><PresetMark /><Label $l={15} $t={3}>Presets...</Label><Label $l={21} $t={3}>Reset</Label></DescFoot>
      </Description>
    </PanelBody>
  </Panel>
);

const GraphPanel = () => (
  <Panel>
    <PanelHead>
      <PanelTab $w={150} $pad={22}>Graph<Close m="5px 0 0 19px" /></PanelTab>
      <Spacer /><ScrollArrows r={14} />
    </PanelHead>
    <PanelBody>
      <ToolRow $h={56}>
        <GephiLogo /><Small $l={8} $t={-2}>Mouse selection</Small><Small $l={14} $t={-2} $human>(Configure)</Small><VRule $l={82} />
      </ToolRow>
      <GraphArea>
        <Tools>
          <Tool $on><Cursor /></Tool>
          <Tool><G><rect x="3" y="3" width="27" height="26" stroke="#333" strokeWidth="2.400" strokeDasharray="4 3" /></G></Tool>
          <Tool $m={0}><Hand /></Tool>
          <HRule />
          <Tool><HelpCursor /></Tool>
          <Tool><Brush /></Tool><Tool><Width /></Tool><Tool><Bucket /></Tool><Tool><AddNode /></Tool>
          <Tool><AddEdge /></Tool><Tool><PathIcon /></Tool><Tool><Heat /></Tool>
          <Spacer />
          <Tool><Magnifier /></Tool>
          <Tool $m={8}><Swatch $s={25} $c="#9b9b9b" $bd="2px solid #000" $inner /></Tool>
          <Tool $m={1}><Underlined $w={32} $bar={7} $c="#ff5587"><Glyph $f={25} $m="-4px 0 0">A</Glyph></Underlined></Tool>
          <Tool $m={33}><Glyph $f={25} $shadow $m="0 4px 0 0">A</Glyph></Tool>
        </Tools>
        <CanvasBox><Network /></CanvasBox>
      </GraphArea>
      <ToolRow $h={62} $pad={7} $r={10} $b={5}>
        <VRule $r={21} $h={42} /><Bulb /><Slot $w={24} /><Camera /><Drop m="0 0 0 13px" s={11} />
        <VRule $l={15} $r={16} $h={42} /><Slot $w={32} $mid><Glyph $font="slab" $f={37} $c="#35353b" $m="-2px 0 0">T</Glyph></Slot>
        <VRule $l={15} $r={10} $h={42} />
        <Toggle $w={44} $m={13} $on><EdgeIcon /></Toggle><EdgeIcon rainbow />
        <Slot $w={32} $l={21} $mid><Glyph $font="slab" $f={35} $c="#fff" $outline $m="-2px 0 0">T</Glyph></Slot>
        <SliderBox $l={30} $v={22} />
        <VRule $l={26} $r={19} $h={42} />
        <Glyph $f={28} $c="#444" $m="-3px 0 0">A</Glyph><Drop s={7} c="#3a55c8" m="0 0 0 1px" />
        <Glyph $f={30} $c="#4a62cf" $m="-3px 0 0 22px">A</Glyph><Drop s={7} c="#3a55c8" m="0 0 0 1px" />
        <Label $l={20} $t={-2}>Arial-BoldMT, 32</Label>
        <SliderBox $l={32} $v={96} />
        <Swatch $s={31} $c="#000" $l={20} $mb={2} /><Slot $w={10} /><Clipboard />
        <Spacer /><Lock />
      </ToolRow>
    </PanelBody>
  </Panel>
);

const ContextPanel = () => (
  <Panel $h={340}>
    <PanelHead>
      <PanelTab $w={146} $pad={10}>Context<Close m="5px 0 0 11px" /></PanelTab>
      <Spacer /><Minimise />
    </PanelHead>
    <PanelBody>
      <Facts>
        <Label $b>Nodes:</Label><Label>1482</Label>
        <Label $b>Edges:</Label><Label>1837</Label>
        <Label>Directed Graph</Label>
      </Facts>
    </PanelBody>
  </Panel>
);

const library = ["Attributes", "Dynamic", "Edges", "Operator", "Topology", "Saved queries"];

const FiltersPanel = () => (
  <Panel>
    <PanelHead>
      <PanelTab $w={126} $pad={10}>Filters<Close m="5px 0 0 11px" /></PanelTab>
      <IdleTab $pad={28}>Statistics</IdleTab>
      <Spacer /><Minimise />
    </PanelHead>
    <PanelBody>
      <ToolRow $h={56} $rule $pad={10}>
        <Slot $w={84}>Reset</Slot><VRule $r={16} />
        <Slot $w={52}><GridArrow /></Slot><Slot $w={56}><GridArrow plain /></Slot>
        <Glyph $f={24} $c="#9f9f9f" $m="-3px 0 0">A</Glyph><TextArrow />
      </ToolRow>
      <Tree $h={520} $m={6}>
        <TreeRow $pad={2}><Slot $w={48}><Folder /></Slot>Library</TreeRow>
        {library.map((name, i) => (
          <TreeRow key={name} $pad={10}>
            <Slot $w={33}>{i < 5 && <Chevron w={13} h={18} d="right" c="#b0b0b0" s={3.5} />}</Slot>
            <Slot $w={43}><Folder s={20} /></Slot>{name}
          </TreeRow>
        ))}
      </Tree>
      <Tree>
        <TreeRow $pad={4}><Slot $w={45}><Funnel /></Slot>Queries</TreeRow>
        <TreeRow $pad={10}><Slot $w={34}><Chevron w={13} h={18} d="right" c="#b0b0b0" s={3.5} /></Slot><Slot $w={42}><Funnel s={17} /></Slot>Degree Range</TreeRow>
      </Tree>
      <FootRow>
        <PushButton $off $w={158} $pad={15} $gap={9}><Hatch />Select</PushButton>
        <PushButton $off $w={142} $pad={23} $gap={12}><Play off />Filter</PushButton>
      </FootRow>
    </PanelBody>
  </Panel>
);

export default function App() {
  return (
    <>
      <Global />
      <Window>
        <TopBar>
          <ModeButton $w={210} $pad={27} $gap={9} $on><Globe />Overview</ModeButton>
          <ModeButton $w={286} $pad={28} $gap={9}><Sheet />Data Laboratory</ModeButton>
          <ModeButton $w={192} $pad={28}><Monitor />Preview</ModeButton>
          <Slot $w={10} />
          <DocTab $w={232} $pad={24}>Workspace 1<Close m="3px 0 0 21px" /></DocTab>
          <DocTab $w={714} $pad={22} $on><Label $ls={0.2}>import:Neo4j - Import networks from a Neo4j database</Label><Close m="3px 0 0 19px" /></DocTab>
          <Spacer /><ScrollArrows r={14} t={22} />
        </TopBar>
        <Work>
          <Column $w={546}><Appearance /><LayoutPanel /></Column>
          <Column $w={2106}><GraphPanel /></Column>
          <Column $w={900}><ContextPanel /><FiltersPanel /></Column>
        </Work>
      </Window>
    </>
  );
}
